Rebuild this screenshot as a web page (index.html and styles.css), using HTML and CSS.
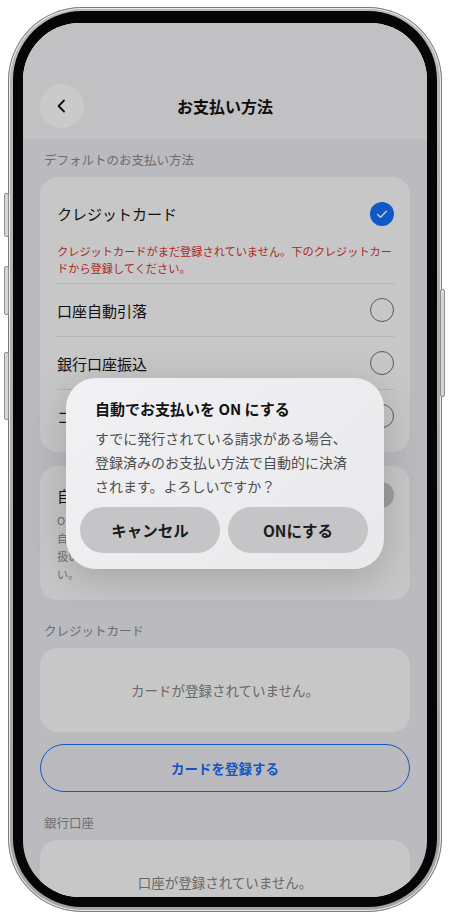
FILE: index.html
```html
<!DOCTYPE html>
<html lang="ja">
<head>
    <meta charset="UTF-8">
    <meta name="viewport" content="width=device-width, initial-scale=1.0">
    <title>お支払い方法</title>
    <link rel="stylesheet" href="styles.css">
</head>
<body>
    <div class="phone">
        <span class="side-btn btn-action"></span>
        <span class="side-btn btn-vol-up"></span>
        <span class="side-btn btn-vol-down"></span>
        <span class="side-btn btn-power"></span>
        <div class="bezel">
            <div class="screen">
                <!-- ヘッダー -->
                <header class="nav">
                    <button class="back">
                        <svg width="12" height="14" viewBox="0 0 12 14"><path d="M8 1.5 L2.6 7 L8 12.5" fill="none" stroke="#111" stroke-width="1.8" stroke-linecap="round" stroke-linejoin="round"/></svg>
                    </button>
                    <h1>お支払い方法</h1>
                    <span></span>
                </header>

                <main class="content">
                    <p class="label">デフォルトのお支払い方法</p>
                    <div class="card methods">
                        <div class="opt">
                            <span>クレジットカード</span>
                            <span class="check">
                                <svg width="24" height="24" viewBox="0 0 24 24"><path d="M7.6 12.4 L10.6 15.3 L16.4 9.2" fill="none" stroke="#fff" stroke-width="1.4" stroke-linecap="round" stroke-linejoin="round"/></svg>
                            </span>
                        </div>
                        <p class="note">クレジットカードがまだ登録されていません。下のクレジットカードから登録してください。</p>
                        <div class="opt"><span>口座自動引落</span><span class="radio"></span></div>
                        <div class="opt"><span>銀行口座振込</span><span class="radio"></span></div>
                        <div class="opt"><span>コンビニ払い</span><span class="radio"></span></div>
                    </div>

                    <div class="card auto">
                        <div class="auto-head"><span>自動でお支払い</span><span class="toggle"></span></div>
                        <p class="desc">ONにすると、請求が確定した時点で、登録済みのお支払い方法で自動的に決済されます。決済エラーの場合は再度お手続きいただく扱いとなりますので、あらかじめご了承のうえ設定をしてください。</p>
                    </div>

                    <p class="label gap">クレジットカード</p>
                    <div class="card empty">カードが登録されていません。</div>
                    <button class="add-btn">カードを登録する</button>

                    <p class="label gap">銀行口座</p>
                    <div class="card empty">口座が登録されていません。</div>
                </main>

                <!-- 確認ダイアログ -->
                <div class="scrim">
                    <div class="dialog">
                        <h2>自動でお支払いを ON にする</h2>
                        <p>すでに発行されている請求がある場合、登録済みのお支払い方法で自動的に決済されます。よろしいですか？</p>
                        <div class="actions">
                            <button>キャンセル</button>
                            <button>ONにする</button>
                        </div>
                    </div>
                </div>
            </div>
        </div>
    </div>
</body>
</html>
```

FILE: styles.css
```css
*{
    margin: 0;
    padding: 0;
}
body{
    background: #fff;
    font-family: "Noto Sans CJK JP", "Noto Sans", sans-serif;
}

/* 端末フレーム */
.phone{
    position: relative;
    width: 434px;
    height: 905px;
    box-sizing: border-box;
    margin: 7px 0 0 8px;
    padding: 4px 5px 5px;
    border-radius: 74px;
    background: linear-gradient(180deg, #b9b9b9, #a4a4a4);
    box-shadow: inset 0 0 0 1px #7a7a7a, inset 0 0 0 2px #ececec;
}
.side-btn{
    position: absolute;
    width: 3px;
    background: #d6d6d6;
    border: 1px solid #8e8e8e;
    border-radius: 2px;
}
.btn-action{ left: -4px; top: 186px; height: 42px; }
.btn-vol-up{ left: -4px; top: 259px; height: 47px; }
.btn-vol-down{ left: -4px; top: 345px; height: 66px; }
.btn-power{ right: -3px; top: 282px; height: 106px; }

.bezel{
    height: 100%;
    box-sizing: border-box;
    padding: 12px 10px 10px;
    border-radius: 69px;
    background: #060606;
}
.screen{
    position: relative;
    height: 874px;
    border-radius: 57px;
    overflow: hidden;
    background: #eaeaef;
}

/* ヘッダー */
.nav{
    display: grid;
    grid-template-columns: 44px 1fr 44px;
    align-items: center;
    height: 116px;
    box-sizing: border-box;
    padding: 61px 17px 11px;
    background: #f2f2f4;
}
.back{
    display: flex;
    align-items: center;
    justify-content: center;
    width: 44px;
    height: 44px;
    border: none;
    border-radius: 50%;
    background: #fdfdfd;
}
.nav h1{
    text-align: center;
    font-size: 16px;
    font-weight: 700;
    color: #111;
}

/* 本文 */
.content{
    padding: 13px 17px 0;
}
.label{
    margin: 0 0 9px 4px;
    font-size: 12.5px;
    line-height: 16px;
    color: #88888d;
}
.label.gap{
    margin-top: 23px;
}
.card{
    background: #f9f9f9;
    border-radius: 18px;
}

.methods{
    padding: 10px 16px 10px 17px;
}
.opt{
    display: flex;
    align-items: center;
    justify-content: space-between;
    height: 53px;
    box-sizing: border-box;
    font-size: 15px;
    color: #141414;
}
.opt + .opt,
.note + .opt{
    border-top: 1px solid #e0e0e2;
}
.note{
    margin-top: 3px;
    padding-bottom: 6px;
    font-size: 11.2px;
    line-height: 17px;
    color: #dc2f2b;
}
.radio{
    width: 24px;
    height: 24px;
    box-sizing: border-box;
    border: 1.5px solid #707070;
    border-radius: 50%;
}
.check{
    display: flex;
    width: 24px;
    height: 24px;
    border-radius: 50%;
    background: #146ef8;
}

.auto{
    margin-top: 14px;
    padding: 18px 16px 17px 17px;
}
.auto-head{
    display: flex;
    align-items: center;
    justify-content: space-between;
    height: 22px;
    font-size: 15px;
    color: #141414;
}
.toggle{
    width: 44px;
    height: 26px;
    border-radius: 13px;
    background: #c6c6ca;
}
.desc{
    margin: 5px 6px 0 0;
    font-size: 11px;
    line-height: 18px;
    color: #8a8a8f;
}

.empty{
    display: flex;
    align-items: center;
    justify-content: center;
    height: 84px;
    font-size: 13.5px;
    color: #828282;
}
.add-btn{
    display: block;
    width: 100%;
    height: 48px;
    margin-top: 12px;
    border: 1px solid #1a6cf6;
    border-radius: 24px;
    background: transparent;
    font-family: inherit;
    font-size: 13.5px;
    font-weight: 700;
    color: #1a6cf6;
}

/* ダイアログ */
.scrim{
    position: absolute;
    top: 0;
    right: 0;
    bottom: 0;
    left: 0;
    display: flex;
    justify-content: center;
    align-items: flex-start;
    padding-top: 355px;
    box-sizing: border-box;
    background: rgba(0, 0, 0, 0.2);
}
.dialog{
    width: 318px;
    box-sizing: border-box;
    padding: 21px 16px 16px 14px;
    border-radius: 30px;
    background: linear-gradient(135deg, #f1f1f3, #e9e9eb);
    box-shadow: 0 10px 40px rgba(0, 0, 0, 0.18);
}
.dialog h2{
    margin: 0 0 7px 15px;
    font-size: 15px;
    line-height: 20px;
    font-weight: 700;
    color: #111;
}
.dialog p{
    margin: 0 17px 9px 15px;
    font-size: 14px;
    line-height: 24px;
    color: #4d4d4d;
}
.actions{
    display: grid;
    grid-template-columns: 1fr 1fr;
    gap: 8px;
}
.actions button{
    height: 46px;
    border: none;
    border-radius: 23px;
    background: #c5c5c7;
    font-family: inherit;
    font-size: 15.5px;
    font-weight: 700;
    color: #1a1a1a;
}
```
